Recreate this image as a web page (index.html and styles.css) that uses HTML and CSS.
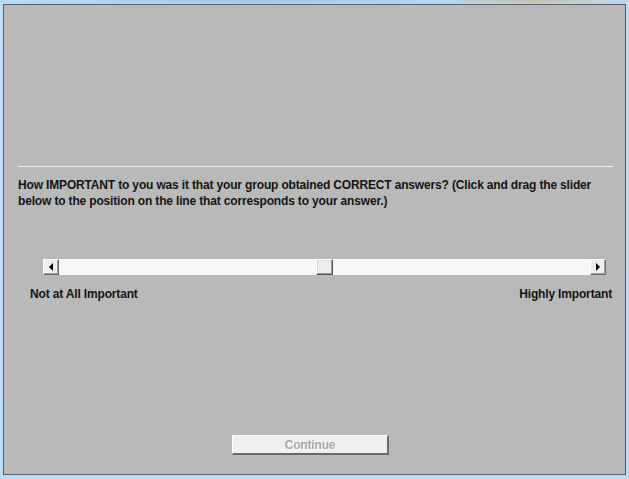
FILE: index.html
```html
<!DOCTYPE html>
<html>
<head>
<meta charset="utf-8">
<link rel="stylesheet" href="styles.css">
</head>
<body>
<div class="frame">
  <div class="window">
    <div class="spacer"></div>
    <div class="rule"></div>
    <p class="question">How IMPORTANT to you was it that your group obtained CORRECT answers? (Click and drag the slider below to the position on the line that corresponds to your answer.)</p>
    <div class="slider">
      <div class="arrow left"><span class="tri-left"></span></div>
      <div class="track">
        <div class="half"></div>
        <div class="thumb"></div>
        <div class="half"></div>
      </div>
      <div class="arrow right"><span class="tri-right"></span></div>
    </div>
    <div class="labels">
      <span>Not at All Important</span>
      <span>Highly Important</span>
    </div>
    <div class="grow"></div>
    <div class="btn-row">
      <button class="continue" disabled>Continue</button>
    </div>
  </div>
</div>
</body>
</html>
```

FILE: styles.css
```css
html, body {
  margin: 0;
  padding: 0;
}
body {
  width: 629px;
  height: 479px;
  overflow: hidden;
  background: linear-gradient(90deg, #bcd8f2 0%, #a9c9ea 40%, #b7d3ef 70%, #c9c4b4 85%, #bdd6ef 100%);
}
.frame {
  padding: 4px 4px 4px 3px;
  height: 471px;
  background: linear-gradient(180deg, transparent 0, transparent 3px, #c4dcf2 4px, #bfdaf4 100%);
}
.window {
  box-sizing: border-box;
  width: 623px;
  height: 471px;
  border: 1px solid #56606c;
  border-right-color: #4c5660;
  background: #b9b9b9;
  display: flex;
  flex-direction: column;
  font-family: "Liberation Sans", Arial, sans-serif;
  font-weight: bold;
  font-size: 12px;
  letter-spacing: -0.16px;
  color: #141414;
}
.spacer {
  height: 161px;
  flex: none;
}
.rule {
  margin-left: 14px;
  width: 595px;
  height: 1px;
  background: #ececec;
  flex: none;
}
.question {
  margin: 10px 0 0 14px;
  width: 590px;
  line-height: 16px;
}
.slider {
  margin: 50px 0 0 39px;
  width: 563px;
  height: 16px;
  display: flex;
}
.arrow {
  box-sizing: border-box;
  width: 16px;
  height: 16px;
  background: #efefef;
  border-top: 1px solid #ffffff;
  border-left: 1px solid #ffffff;
  border-right: 1px solid #6a6a6a;
  border-bottom: 1px solid #6a6a6a;
  box-shadow: inset -1px -1px 0 #a0a0a0;
  display: flex;
  align-items: center;
  justify-content: center;
  flex: none;
}
.tri-left {
  width: 0;
  height: 0;
  border-top: 4px solid transparent;
  border-bottom: 4px solid transparent;
  border-right: 4px solid #000;
}
.tri-right {
  width: 0;
  height: 0;
  border-top: 4px solid transparent;
  border-bottom: 4px solid transparent;
  border-left: 4px solid #000;
}
.track {
  flex: 1;
  display: flex;
  background-color: #fbfbfb;
  background-image: repeating-conic-gradient(#f0f0f0 0 25%, #ffffff 0 50%);
  background-size: 2px 2px;
}
.half {
  flex: 1;
}
.thumb {
  box-sizing: border-box;
  width: 17px;
  height: 16px;
  flex: none;
  background: #ededed;
  border-top: 1px solid #ffffff;
  border-left: 1px solid #ffffff;
  border-right: 1px solid #555555;
  border-bottom: 1px solid #555555;
  box-shadow: inset -1px -1px 0 #9a9a9a, inset 1px 1px 0 #d8d8d8;
}
.labels {
  margin: 12px 0 0 26px;
  width: 582px;
  display: flex;
  justify-content: space-between;
  line-height: 15px;
}
.grow {
  flex: 1;
}
.btn-row {
  display: flex;
  padding-left: 228px;
  margin-bottom: 19px;
}
.continue {
  box-sizing: border-box;
  width: 157px;
  height: 20px;
  padding: 0;
  background: #efefef;
  border: none;
  border-top: 1px solid #ffffff;
  border-left: 1px solid #ffffff;
  border-right: 2px solid #6b6b6b;
  border-bottom: 2px solid #6b6b6b;
  font-family: "Liberation Sans", Arial, sans-serif;
  font-weight: bold;
  font-size: 12px;
  letter-spacing: -0.16px;
  color: #a8a8a8;
  text-shadow: 1px 1px 0 #ffffff;
}
```
